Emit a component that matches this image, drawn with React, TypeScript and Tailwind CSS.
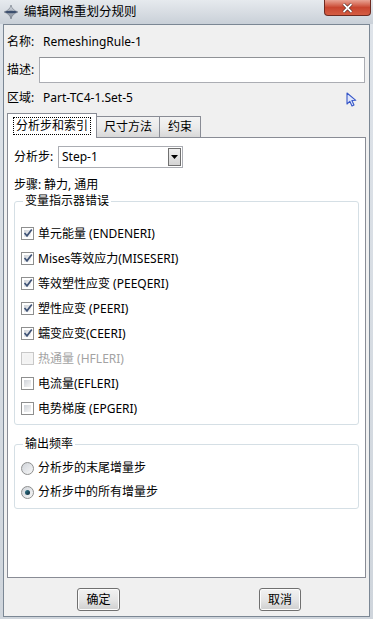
import React from "react";

function Check({ checked, disabled }: { checked?: boolean; disabled?: boolean }) {
  return (
    <span
      className={`flex w-[13px] h-[13px] shrink-0 border p-[2px] ${
        disabled ? "border-[#c8c8c8] bg-[#f4f4f4]" : "border-[#8e8f8f] bg-white"
      }`}
    >
      <span
        className={`relative flex-1 ${
          disabled ? "bg-[#f2f2f2]" : "bg-gradient-to-br from-[#cfd3d9] to-[#f6f6f6]"
        }`}
      >
        {checked && (
          <svg className="absolute left-[-1px] top-[-2px]" width="10" height="10" viewBox="0 0 10 10">
            <path d="M1.5 5 L4 7.8 L8.8 1.5" stroke="#3f5376" strokeWidth="1.7" fill="none" />
          </svg>
        )}
      </span>
    </span>
  );
}

function Radio({ checked }: { checked?: boolean }) {
  return (
    <span className="flex w-[13px] h-[13px] shrink-0 items-center justify-center rounded-full border border-[#8e8f8f] bg-gradient-to-br from-[#cfd3d9] to-[#f8f8f8]">
      {checked && (
        <span className="w-[5px] h-[5px] rounded-full bg-gradient-to-br from-[#2e7a8f] to-[#0f2b3a]" />
      )}
    </span>
  );
}

function CheckRow({ label, checked, disabled }: { label: string; checked?: boolean; disabled?: boolean }) {
  return (
    <div className="flex h-[25px] items-center">
      <Check checked={checked} disabled={disabled} />
      <span className={`ml-[4px] leading-[14px] ${disabled ? "text-[#a3a3a3]" : "text-black"}`}>{label}</span>
    </div>
  );
}

function Button({ label, className }: { label: string; className: string }) {
  return (
    <div
      className={`flex h-[23px] items-center justify-center rounded-[3px] border border-[#707070] bg-gradient-to-b from-[#f2f2f2] via-[#e6e6e6] to-[#cfcfcf] shadow-[inset_0_0_0_1px_#fcfcfc] ${className}`}
    >
      <span className="leading-[14px]">{label}</span>
    </div>
  );
}

export default function App() {
  return (
    <div className="w-[373px] h-[619px] flex flex-col bg-gradient-to-b from-[#dfe4ea] to-[#cfd5dc] font-['Noto_Sans','Noto_Sans_CJK_SC',sans-serif] text-[12px] text-black overflow-hidden">
      {/* title bar */}
      <div className="flex h-[24px] shrink-0 bg-gradient-to-b from-[#e6eaee] via-[#d8dde3] to-[#c9d0d8]">
        <div className="flex items-center pl-[3px] pt-[0px]">
          <svg width="16" height="16" viewBox="0 0 16 16">
            <defs>
              <linearGradient id="g1" x1="0" y1="0" x2="0" y2="1">
                <stop offset="0" stopColor="#d8dde4" />
                <stop offset="1" stopColor="#7d8794" />
              </linearGradient>
            </defs>
            <path d="M8 1 Q9 6 15 8 Q9 10 8 15 Q7 10 1 8 Q7 6 8 1 Z" fill="url(#g1)" stroke="#6b7480" strokeWidth="0.6" />
            <ellipse cx="8" cy="8" rx="6" ry="1.3" fill="#3c4f6e" />
          </svg>
          <span className="ml-[5px] leading-[16px] text-[12.5px]">编辑网格重划分规则</span>
        </div>
        <div className="flex-1" />
        <div className="mr-[2px] flex h-[16px] w-[47px] items-center justify-center rounded-b-[4px] border border-t-0 border-[#6e2a20] bg-gradient-to-b from-[#e8a394] via-[#c8452f] to-[#d55d43]">
          <svg width="11" height="10" viewBox="0 0 11 10">
            <path d="M1.5 1 L9.5 9 M9.5 1 L1.5 9" stroke="#3a1510" strokeWidth="3" />
            <path d="M1.5 1 L9.5 9 M9.5 1 L1.5 9" stroke="#ffffff" strokeWidth="1.8" />
          </svg>
        </div>
      </div>

      {/* client area */}
      <div className="mx-[3px] mb-[2px] flex flex-1 flex-col border border-[#7b8794] bg-[#f0f0f0] px-[3px]">
        <div className="mt-[7px] flex h-[20px] items-center">
          <span className="w-[36px] leading-[14px]">名称:</span>
          <span className="leading-[14px]">RemeshingRule-1</span>
        </div>
        <div className="mt-[5px] flex h-[26px] items-center">
          <span className="w-[32px] leading-[14px]">描述:</span>
          <div className="h-[26px] w-[326px] border border-[#abadb3] border-t-[#8f9296] bg-white" />
        </div>
        <div className="mt-[5px] flex h-[20px] items-center">
          <span className="w-[36px] leading-[14px]">区域:</span>
          <span className="leading-[14px]">Part-TC4-1.Set-5</span>
          <div className="flex-1" />
          <svg className="mr-[9px] mt-[2px]" width="11" height="15" viewBox="0 0 11 15">
            <path d="M1 1 L1 12 L3.8 9.3 L6 14 L8 13 L5.9 8.5 L9.8 8.3 Z" fill="#dfe6fb" stroke="#3757c8" strokeWidth="1.1" strokeLinejoin="round" />
          </svg>
        </div>

        {/* tabs */}
        <div className="mt-[5px] flex h-[24px] items-end">
          <div className="relative z-10 -mb-px flex h-[25px] w-[90px] items-center justify-center border border-b-0 border-[#898c95] bg-white">
            <span className="border border-dotted border-black px-[2px] leading-[16px]">分析步和索引</span>
          </div>
          <div className="flex h-[21px] w-[63px] items-center justify-center border border-b-0 border-l-0 border-[#898c95] bg-gradient-to-b from-[#f3f3f3] via-[#ebebeb] to-[#d8d8d8]">
            <span className="leading-[14px]">尺寸方法</span>
          </div>
          <div className="flex h-[21px] w-[41px] items-center justify-center border border-b-0 border-l-0 border-[#898c95] bg-gradient-to-b from-[#f3f3f3] via-[#ebebeb] to-[#d8d8d8]">
            <span className="leading-[14px]">约束</span>
          </div>
        </div>

        {/* panel */}
        <div className="flex h-[441px] flex-col border border-[#898c95] bg-white px-[6px]">
          <div className="mt-[8px] flex h-[22px] items-center">
            <span className="w-[44px] leading-[14px]">分析步:</span>
            <div className="flex h-[22px] w-[125px] items-center border border-[#abadb3] bg-white pl-[3px] pr-[1px]">
              <span className="flex-1 leading-[14px]">Step-1</span>
              <div className="flex h-[18px] w-[13px] items-center justify-center border border-[#707070] bg-gradient-to-b from-[#f0f0f0] to-[#d4d4d4]">
                <svg width="7" height="4" viewBox="0 0 7 4">
                  <path d="M0 0 L7 0 L3.5 4 Z" fill="#000" />
                </svg>
              </div>
            </div>
          </div>
          <div className="mt-[8px] flex h-[18px] items-center">
            <span className="w-[30px] leading-[14px]">步骤:</span>
            <span className="leading-[14px]">静力, 通用</span>
          </div>

          <fieldset className="rounded-[3px] border border-[#d5dfe5] px-[6px] pb-[3px]">
            <legend className="ml-[2px] px-[2px] leading-[14px]">变量指示器错误</legend>
            <div className="pt-[13px] flex flex-col">
              <CheckRow label="单元能量 (ENDENERI)" checked />
              <CheckRow label="Mises等效应力(MISESERI)" checked />
              <CheckRow label="等效塑性应变 (PEEQERI)" checked />
              <CheckRow label="塑性应变 (PEERI)" checked />
              <CheckRow label="蠕变应变(CEERI)" checked />
              <CheckRow label="热通量 (HFLERI)" disabled />
              <CheckRow label="电流量(EFLERI)" />
              <CheckRow label="电势梯度 (EPGERI)" />
            </div>
          </fieldset>

          <fieldset className="mt-[12px] rounded-[3px] border border-[#d5dfe5] px-[6px] pb-[4px]">
            <legend className="ml-[2px] px-[2px] leading-[14px]">输出频率</legend>
            <div className="pt-[5px] flex flex-col">
              <div className="flex h-[24px] items-center">
                <Radio />
                <span className="ml-[4px] leading-[14px]">分析步的末尾增量步</span>
              </div>
              <div className="flex h-[24px] items-center">
                <Radio checked />
                <span className="ml-[4px] leading-[14px]">分析步中的所有增量步</span>
              </div>
            </div>
          </fieldset>
        </div>

        {/* buttons */}
        <div className="mt-[10px] flex">
          <Button label="确定" className="ml-[70px] w-[43px]" />
          <Button label="取消" className="ml-[139px] w-[42px]" />
        </div>
      </div>
    </div>
  );
}
